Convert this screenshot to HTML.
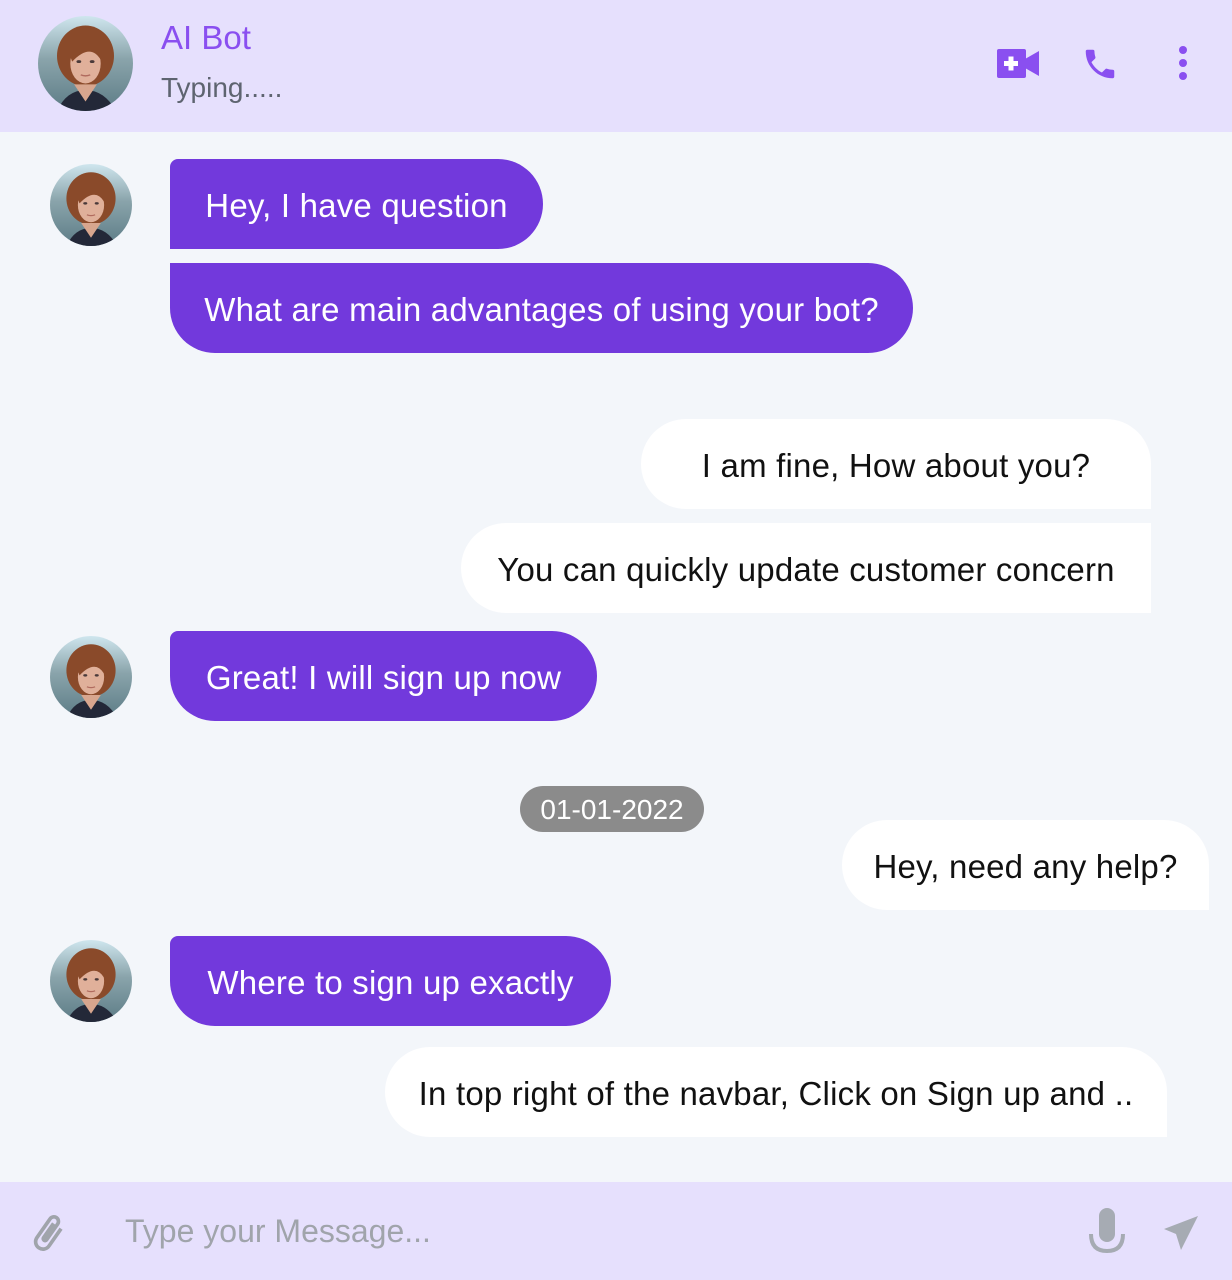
<!DOCTYPE html>
<html><head><meta charset="utf-8"><style>
*{margin:0;padding:0;box-sizing:border-box}
body{width:1232px;height:1280px;background:#f3f6fa;position:relative;overflow:hidden;font-family:"Liberation Sans",sans-serif}
.hdr{position:absolute;left:0;top:0;width:1232px;height:132px;background:#e6e0fd}
.ftr{position:absolute;left:0;top:1182px;width:1232px;height:98px;background:#e6e0fd}
.b{position:absolute;height:90px;display:flex;align-items:center;justify-content:center;font-size:33px;white-space:nowrap;letter-spacing:0.2px;padding-top:4px}
.in{background:#7239dc;color:#fff;border-radius:8px 45px 45px 45px}
.out{background:#fff;color:#111;border-radius:45px 45px 0 45px}
.av{position:absolute}
</style></head><body>
<svg width="0" height="0" style="position:absolute">
<defs>
<linearGradient id="bg" x1="0" y1="0" x2="0" y2="1"><stop offset="0" stop-color="#cfe6ee"/><stop offset="0.45" stop-color="#8aa4ab"/><stop offset="1" stop-color="#5d7c86"/></linearGradient>
<clipPath id="cc"><circle cx="50" cy="50" r="50"/></clipPath>
<symbol id="face" viewBox="0 0 100 100">
<g clip-path="url(#cc)">
<rect width="100" height="100" fill="url(#bg)"/>
<ellipse cx="50" cy="42" rx="30" ry="32" fill="#8a4a2a"/>
<path d="M20 100 Q30 78 50 78 Q70 78 82 100Z" fill="#232838"/>
<path d="M38 72 L50 90 L62 72Z" fill="#d8a68e"/>
<ellipse cx="50" cy="50" rx="16" ry="21" fill="#e0b09a"/>
<path d="M33 40 Q40 18 64 28 Q70 36 66 46 Q55 28 36 48Z" fill="#8a4a2a"/>
<ellipse cx="43" cy="48" rx="2.5" ry="1.5" fill="#4a3a3a"/>
<ellipse cx="57" cy="48" rx="2.5" ry="1.5" fill="#4a3a3a"/>
<path d="M45 62 Q50 64 55 62" stroke="#b06b5e" stroke-width="1.5" fill="none"/>
</g>
</symbol>
</defs></svg>

<div class="hdr"></div>
<svg class="av" style="left:38px;top:16px" width="95" height="95"><use href="#face"/></svg>
<div style="position:absolute;left:161px;top:19px;font-size:33px;color:#8a4ff0">AI Bot</div>
<div style="position:absolute;left:161px;top:72px;font-size:28px;color:#5e6470">Typing.....</div>

<svg style="position:absolute;left:997px;top:47px" width="42" height="34" viewBox="0 0 42 34">
<rect x="0" y="2" width="29" height="29" rx="2" fill="#8a4ff0"/>
<path d="M28 12 L42 4 L42 29 L28 21Z" fill="#8a4ff0"/>
<rect x="7" y="14" width="14" height="5" fill="#fff"/><rect x="11.5" y="9.5" width="5" height="14" fill="#fff"/>
</svg>
<svg style="position:absolute;left:1080px;top:45px" width="40" height="38" viewBox="0 0 24 24">
<path d="M6.6 10.8c1.4 2.8 3.8 5.1 6.6 6.6l2.2-2.2c.3-.3.7-.4 1-.2 1.1.4 2.3.6 3.6.6.6 0 1 .4 1 1V20c0 .6-.4 1-1 1C10.6 21 3 13.4 3 4c0-.6.4-1 1-1h3.5c.6 0 1 .4 1 1 0 1.2.2 2.4.6 3.6.1.3 0 .7-.2 1z" fill="#8a4ff0"/>
</svg>
<div style="position:absolute;left:1179px;top:46px;width:8px;height:8px;border-radius:50%;background:#8a4ff0"></div>
<div style="position:absolute;left:1179px;top:59px;width:8px;height:8px;border-radius:50%;background:#8a4ff0"></div>
<div style="position:absolute;left:1179px;top:72px;width:8px;height:8px;border-radius:50%;background:#8a4ff0"></div>

<svg class="av" style="left:50px;top:164px" width="82" height="82"><use href="#face"/></svg>
<svg class="av" style="left:50px;top:636px" width="82" height="82"><use href="#face"/></svg>
<svg class="av" style="left:50px;top:940px" width="82" height="82"><use href="#face"/></svg>

<div class="b in" style="left:170px;top:159px;width:373px;border-radius:8px 45px 45px 0">Hey, I have question</div>
<div class="b in" style="left:170px;top:263px;width:743px;border-radius:0 45px 45px 45px">What are main advantages of using your bot?</div>
<div class="b out" style="left:641px;top:419px;width:510px;border-radius:45px 45px 0 45px">I am fine, How about you?</div>
<div class="b out" style="left:461px;top:523px;width:690px;border-radius:45px 0 0 45px">You can quickly update customer concern</div>
<div class="b in" style="left:170px;top:631px;width:427px">Great! I will sign up now</div>
<div style="position:absolute;left:520px;top:786px;width:184px;height:46px;border-radius:23px;background:#8b8b8b;color:#fff;font-size:28px;display:flex;align-items:center;justify-content:center;padding-top:2px">01-01-2022</div>
<div class="b out" style="left:842px;top:820px;width:367px">Hey, need any help?</div>
<div class="b in" style="left:170px;top:936px;width:441px">Where to sign up exactly</div>
<div class="b out" style="left:385px;top:1047px;width:782px">In top right of the navbar, Click on Sign up and ..</div>

<div class="ftr"></div>
<svg style="position:absolute;left:26px;top:1210px" width="44" height="46" viewBox="0 0 24 24">
<path d="M16.5 6v11.5a4 4 0 0 1-8 0V5a2.5 2.5 0 0 1 5 0v10.5a1 1 0 0 1-2 0V6" fill="none" stroke="#a0a4ab" stroke-width="2" transform="rotate(35 12 12)"/>
</svg>
<div style="position:absolute;left:125px;top:1213px;font-size:32px;color:#a0a4ab">Type your Message...</div>
<svg style="position:absolute;left:1088px;top:1207px" width="38" height="48" viewBox="0 0 38 48">
<rect x="11" y="1" width="16" height="34" rx="8" fill="#a6abb3"/>
<path d="M3 27 Q3 44 19 44 Q35 44 35 27" fill="none" stroke="#a6abb3" stroke-width="4"/>
</svg>
<svg style="position:absolute;left:1162px;top:1214px" width="38" height="38" viewBox="0 0 38 38">
<path d="M36 2 L2 15 L14 20 L19 36Z" fill="#a6abb3"/>
</svg>
</body></html>
